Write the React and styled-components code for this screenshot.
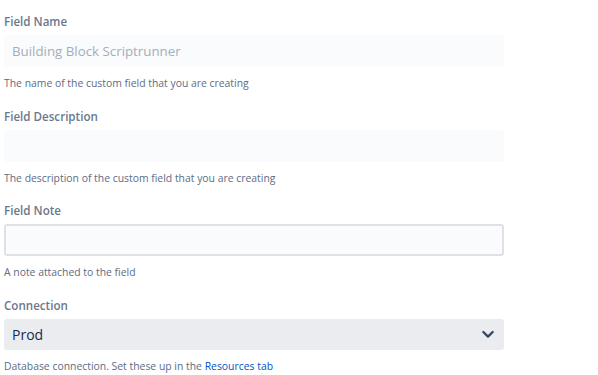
import React from 'react';
import styled, { createGlobalStyle } from 'styled-components';

const GlobalStyle = createGlobalStyle`
  html, body {
    margin: 0;
    padding: 0;
    background: #ffffff;
  }
  body {
    font-family: "Open Sans", "Noto Sans", sans-serif;
  }
`;

const Form = styled.div`
  width: 500px;
  padding: 12px 0 0 4px;
  display: flex;
  flex-direction: column;
`;

const Field = styled.div`
  display: flex;
  flex-direction: column;
  height: 94.5px;
`;

const Label = styled.label`
  font-size: 11.6px;
  font-weight: 600;
  color: #6b778c;
  line-height: 18px;
  margin-bottom: 4px;
  margin-top: 1px;
`;

const TextInput = styled.input`
  box-sizing: border-box;
  width: 500px;
  height: 32px;
  padding: 0 6px;
  font-family: inherit;
  font-size: 13.3px;
  color: #172b4d;
  background: #fafbfc;
  border: 2px solid ${(p) => (p.$outlined ? '#dfe1e6' : '#fafbfc')};
  border-radius: 3px;
  outline: none;

  &::placeholder {
    color: #a5adba;
  }
`;

const Select = styled.div`
  box-sizing: border-box;
  width: 500px;
  height: 31px;
  padding: 0 8px 0 8px;
  display: flex;
  align-items: center;
  justify-content: space-between;
  background: #ebecf0;
  border-radius: 3px;
  font-size: 14px;
  color: #172b4d;
`;

const Help = styled.div`
  margin-top: 8px;
  font-size: 10.4px;
  line-height: 16px;
  color: #5e6c84;
`;

const HelpLink = styled.a`
  color: #0052cc;
  text-decoration: none;
`;

const Chevron = () => (
  <svg width="16" height="16" viewBox="0 0 24 24" fill="none">
    <path d="M5 9l7 7 7-7" stroke="#344563" strokeWidth="3.4" strokeLinecap="round" strokeLinejoin="round" />
  </svg>
);

export default function App() {
  return (
    <>
      <GlobalStyle />
      <Form>
        <Field>
          <Label>Field Name</Label>
          <TextInput placeholder="Building Block Scriptrunner" />
          <Help>The name of the custom field that you are creating</Help>
        </Field>
        <Field>
          <Label>Field Description</Label>
          <TextInput />
          <Help>The description of the custom field that you are creating</Help>
        </Field>
        <Field>
          <Label>Field Note</Label>
          <TextInput $outlined />
          <Help>A note attached to the field</Help>
        </Field>
        <Field>
          <Label>Connection</Label>
          <Select>
            <span>Prod</span>
            <Chevron />
          </Select>
          <Help>
            Database connection. Set these up in the <HelpLink href="#">Resources tab</HelpLink>
          </Help>
        </Field>
      </Form>
    </>
  );
}
